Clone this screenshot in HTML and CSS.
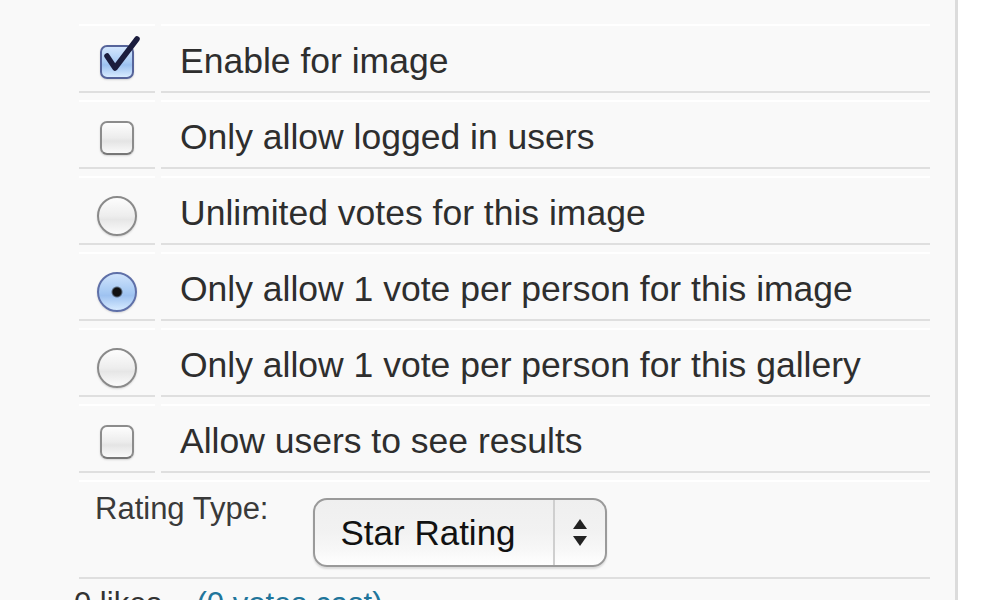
FILE: index.html
```html
<!DOCTYPE HTML>
<html>

<head>
    <meta name="viewport" content="width=device-width, initial-scale=1">
    <title>Image voting options</title>
    <link rel="stylesheet" href="styles.css">
</head>

<body>
    <div class="panel">
        <table class="options">
            <tr>
                <td class="ctrl">
                    <span class="check on">
                        <svg class="tick" viewBox="0 0 44 44" width="44" height="44"><polyline points="7,21 15,33 37,4" /></svg>
                    </span>
                </td>
                <td class="label">Enable for image</td>
            </tr>
            <tr>
                <td class="ctrl"><span class="check"></span></td>
                <td class="label">Only allow logged in users</td>
            </tr>
            <tr>
                <td class="ctrl"><span class="radio"></span></td>
                <td class="label">Unlimited votes for this image</td>
            </tr>
            <tr>
                <td class="ctrl"><span class="radio on"></span></td>
                <td class="label">Only allow 1 vote per person for this image</td>
            </tr>
            <tr>
                <td class="ctrl"><span class="radio"></span></td>
                <td class="label">Only allow 1 vote per person for this gallery</td>
            </tr>
            <tr>
                <td class="ctrl"><span class="check"></span></td>
                <td class="label">Allow users to see results</td>
            </tr>
            <tr>
                <td class="rating" colspan="2">
                    <div class="rating-row">
                        <span class="rating-label">Rating Type:</span>
                        <div class="select">
                            <span class="select-value">Star Rating</span>
                            <span class="select-arrows">
                                <svg viewBox="0 0 14 28" width="14" height="28"><polygon points="7,0 14,10 0,10" /><polygon points="0,17 14,17 7,27" /></svg>
                            </span>
                        </div>
                    </div>
                </td>
            </tr>
        </table>
        <p class="votes">0 likes <a href="#">(0 votes cast)</a></p>
    </div>
</body>

</html>
```

FILE: styles.css
```css
html {
    font-family: "Liberation Sans", Arial, sans-serif;
}

body {
    margin: 0px;
    background: #fff;
    overflow: hidden;
}

.panel {
    width: 955px;
    height: 600px;
    background: #f9f9f9;
    border-right: 3px solid #dcdcdc;
    overflow: hidden;
}

.options {
    border-collapse: separate;
    border-spacing: 6px 7px;
    width: 863px;
    margin: 17px 0 0 73px;
}

.options td {
    border-top: 2px solid #fff;
    border-bottom: 2px solid #dfdfdf;
    vertical-align: top;
}

.ctrl {
    width: 76px;
    padding: 18px 0 0;
}

.label {
    padding: 15px 0 10px 19px;
    font-size: 35.5px;
    line-height: 40px;
    color: #2e2e2e;
}

/* checkboxes */
.check {
    position: relative;
    display: block;
    box-sizing: border-box;
    width: 34px;
    height: 34px;
    margin: 1px auto 0;
    border: 2px solid #8c8c8c;
    border-bottom-color: #777;
    border-radius: 7px;
    background: linear-gradient(#fdfdfd, #ececec 50%, #e4e4e4 60%, #fafafa);
    box-shadow: 0 1px 2px rgba(0, 0, 0, 0.15);
}

.check.on {
    border-color: #56649a;
    background: linear-gradient(#d3e6fd, #a9cbf4 50%, #9cc1f0 60%, #d8ebff);
}

.tick {
    position: absolute;
    left: -2px;
    top: -12px;
}

.tick polyline {
    fill: none;
    stroke: #1b1d3d;
    stroke-width: 5.5;
    stroke-linejoin: round;
    stroke-linecap: round;
}

/* radio buttons */
.radio {
    display: block;
    box-sizing: border-box;
    width: 40px;
    height: 40px;
    margin: 0 auto;
    border: 2px solid #8a8a8a;
    border-radius: 50%;
    background: linear-gradient(#fdfdfd, #ededed 50%, #e6e6e6 60%, #fbfbfb);
    box-shadow: 0 1px 2px rgba(0, 0, 0, 0.15);
}

.radio.on {
    border-color: #5f70a8;
    background: radial-gradient(circle, #111 0, #111 4px, rgba(17, 17, 17, 0) 6px),
        linear-gradient(#cfe3fc, #a6c9f3 50%, #9ec2f0 60%, #d6eaff);
}

/* rating type */
.rating {
    padding: 9px 0 10px 16px;
}

.rating-row {
    display: flex;
    align-items: flex-start;
}

.rating-label {
    font-size: 31px;
    line-height: 36px;
    color: #3a3a3a;
    margin-right: 45px;
}

.select {
    display: flex;
    box-sizing: border-box;
    width: 294px;
    height: 69px;
    margin-top: 7px;
    border: 2px solid #9a9a9a;
    border-radius: 14px;
    background: linear-gradient(#efefef, #f2f2f2 50%, #f7f7f7 75%, #fff);
    box-shadow: 0 2px 2px rgba(0, 0, 0, 0.12);
}

.select-value {
    flex: 1;
    display: flex;
    align-items: center;
    padding-left: 25px;
    font-size: 35px;
    color: #111;
    border-right: 2px solid #cfcfcf;
}

.select-arrows {
    width: 50px;
    display: flex;
    align-items: center;
    justify-content: center;
}

.select-arrows polygon {
    fill: #222;
}

.votes {
    margin: 0 0 0 74px;
    font-size: 31px;
    line-height: 36px;
    color: #333;
}

.votes a {
    color: #21759b;
    text-decoration: none;
    margin-left: 26px;
}
```
